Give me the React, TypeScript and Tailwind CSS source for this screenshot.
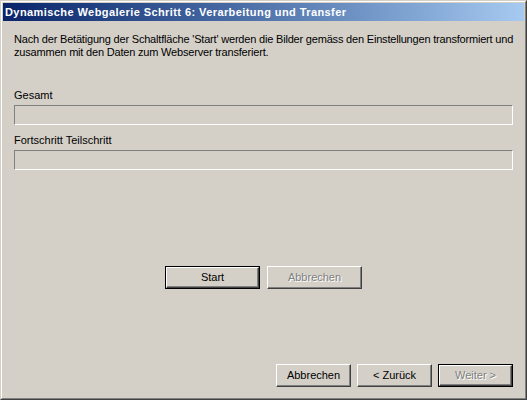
import type { ReactNode } from "react";

const font = { fontFamily: '"Liberation Sans", Arial, sans-serif' };

function Btn({
  children,
  def = false,
  disabled = false,
  w = "w-[75px]",
}: {
  children: ReactNode;
  def?: boolean;
  disabled?: boolean;
  w?: string;
}) {
  // klassischer Win2000-Button: weiße Kante oben/links, dunkle unten/rechts
  const inner = (
    <div className="flex h-full w-full items-center justify-center border border-t-white border-l-white border-r-[#404040] border-b-[#404040] shadow-[inset_-1px_-1px_0_#808080]">
      <span
        className={disabled ? "text-[#808080] [text-shadow:1px_1px_0_#ffffff]" : "text-black"}
      >
        {children}
      </span>
    </div>
  );
  return (
    <div className={`${w} h-[23px] bg-[#d4d0c8] ${def ? "border border-black" : ""}`}>
      {inner}
    </div>
  );
}

function Progress() {
  return (
    <div className="h-[20px] w-full border border-t-[#808080] border-l-[#808080] border-r-white border-b-white bg-[#d4d0c8]" />
  );
}

export default function App() {
  return (
    <div
      className="h-[400px] w-[527px] border border-t-[#d4d0c8] border-l-[#d4d0c8] border-r-[#404040] border-b-[#404040] bg-[#d4d0c8] text-[11px] leading-[13px] text-black"
      style={font}
    >
      <div className="flex h-full w-full flex-col border border-t-white border-l-white border-r-[#808080] border-b-[#808080] p-px">
        <div className="flex h-[18px] shrink-0 items-center bg-gradient-to-r from-[#0a246a] to-[#a6caf0] pl-[2px]">
          <span className="whitespace-nowrap text-[11px] font-bold tracking-[0.42px] text-white">
            Dynamische Webgalerie Schritt 6: Verarbeitung und Transfer
          </span>
        </div>

        <div className="flex flex-1 flex-col px-[11px] pt-[12px] pb-[10px]">
          <p className="whitespace-nowrap tracking-[-0.19px]">
            Nach der Betätigung der Schaltfläche 'Start' werden die Bilder gemäss den Einstellungen transformiert und
            <br />
            zusammen mit den Daten zum Webserver transferiert.
          </p>

          <div className="mt-[30px]">Gesamt</div>
          <div className="mt-[3px]">
            <Progress />
          </div>

          <div className="mt-[9px]">Fortschritt Teilschritt</div>
          <div className="mt-[3px]">
            <Progress />
          </div>

          <div className="mt-[96px] flex justify-center gap-[7px]">
            <Btn def w="w-[95px]">
              Start
            </Btn>
            <Btn disabled w="w-[95px]">
              Abbrechen
            </Btn>
          </div>

          <div className="mt-auto flex justify-end gap-[6px]">
            <Btn>Abbrechen</Btn>
            <Btn>&lt; Zurück</Btn>
            <Btn def disabled>
              Weiter &gt;
            </Btn>
          </div>
        </div>
      </div>
    </div>
  );
}
